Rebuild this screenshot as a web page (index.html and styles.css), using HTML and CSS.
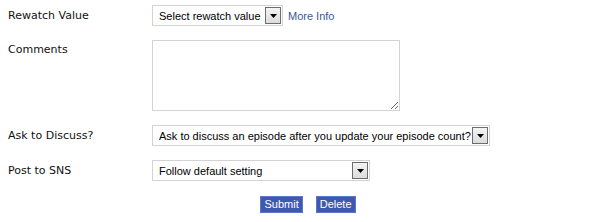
FILE: index.html
```html
<!DOCTYPE html>
<html lang="en">
<head>
    <meta charset="UTF-8">
    <title>Edit Anime Details</title>
    <link rel="stylesheet" href="styles.css">
</head>
<body>

    <form class="edit-form">
        <div class="row">
            <label class="field-label">Rewatch Value</label>
            <div class="field">
                <span class="select-wrap">
                    <select class="inputtext">
                        <option>Select rewatch value</option>
                    </select>
                    <span class="arrow"><svg width="7" height="4" viewBox="0 0 7 4"><path d="M0 0h7L3.5 4z" fill="#000"/></svg></span>
                </span>
                <a href="#" class="more-info">More Info</a>
            </div>
        </div>

        <div class="row row-top">
            <label class="field-label">Comments</label>
            <div class="field">
                <textarea class="comments"></textarea>
            </div>
        </div>

        <div class="row">
            <label class="field-label">Ask to Discuss?</label>
            <div class="field">
                <span class="select-wrap">
                    <select class="inputtext discuss">
                        <option>Ask to discuss an episode after you update your episode count?</option>
                    </select>
                    <span class="arrow"><svg width="7" height="4" viewBox="0 0 7 4"><path d="M0 0h7L3.5 4z" fill="#000"/></svg></span>
                </span>
            </div>
        </div>

        <div class="row">
            <label class="field-label">Post to SNS</label>
            <div class="field">
                <span class="select-wrap">
                    <select class="inputtext sns">
                        <option>Follow default setting</option>
                    </select>
                    <span class="arrow"><svg width="7" height="4" viewBox="0 0 7 4"><path d="M0 0h7L3.5 4z" fill="#000"/></svg></span>
                </span>
            </div>
        </div>

        <div class="buttons">
            <button type="button" class="btn">Submit</button>
            <button type="button" class="btn">Delete</button>
        </div>
    </form>

</body>
</html>
```

FILE: styles.css
```css
* {
    box-sizing: border-box;
}

body {
    margin: 0;
    background: #fff;
    font-family: "DejaVu Sans", Verdana, sans-serif;
    font-size: 11px;
    color: #111;
}

.edit-form {
    padding: 5px 0 0 8px;
    display: flex;
    flex-direction: column;
    gap: 14px;
}

/* label | field */
.row {
    display: grid;
    grid-template-columns: 144px 1fr;
    align-items: center;
}

.row-top {
    align-items: start;
}

.row-top .field-label {
    padding-top: 3px;
}

.field {
    display: flex;
    align-items: center;
}

/* Selects */
.select-wrap {
    position: relative;
    display: inline-block;
    height: 21px;
}

.inputtext {
    appearance: none;
    -webkit-appearance: none;
    display: block;
    height: 21px;
    width: 131px;
    padding: 0 0 0 6px;
    border: 1px solid #d3d3d3;
    border-radius: 0;
    background: #fff;
    font-family: "Liberation Sans", Arial, sans-serif;
    font-size: 11px;
    color: #000;
}

.inputtext.discuss {
    width: 338px;
}

.inputtext.sns {
    width: 218px;
}

.arrow {
    position: absolute;
    top: 2px;
    right: 2px;
    width: 16px;
    height: 17px;
    border: 1px solid #6d6d6d;
    background: linear-gradient(#f4f4f4, #dcdcdc);
    display: flex;
    align-items: center;
    justify-content: center;
    pointer-events: none;
}

.more-info {
    margin-left: 5px;
    font-family: "Liberation Sans", Arial, sans-serif;
    font-size: 11px;
    color: #3b5998;
    text-decoration: none;
}

/* Comments */
.comments {
    display: block;
    width: 248px;
    height: 71px;
    border: 1px solid #d3d3d3;
    resize: both;
    font-family: "Liberation Sans", Arial, sans-serif;
    font-size: 12px;
}

/* Buttons */
.buttons {
    display: flex;
    justify-content: center;
    gap: 13px;
    margin-left: -8px;
    margin-top: 1px;
}

.btn {
    height: 17px;
    padding: 0 3px;
    border: 1px solid #5a78c8;
    background: #3f59b0;
    color: #fff;
    font-family: "Liberation Sans", Arial, sans-serif;
    font-size: 11px;
    line-height: 15px;
    cursor: pointer;
}
```
